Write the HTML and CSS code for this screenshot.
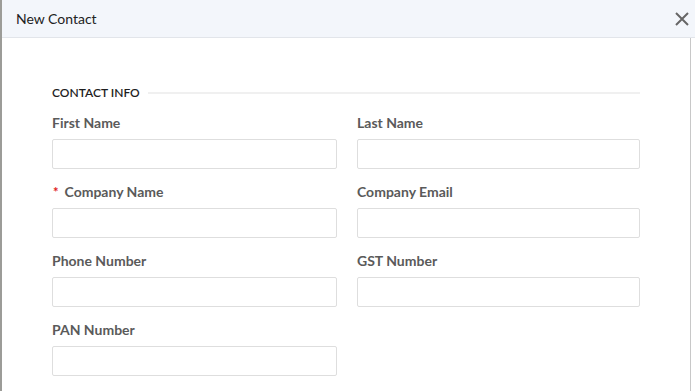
FILE: index.html
```html
<!DOCTYPE html>
<html>
<head>
<meta charset="utf-8">
<link rel="stylesheet" href="styles.css">
</head>
<body>
<div class="page">
  <div class="edge"></div>
  <div class="modal">
    <div class="header">
      <span class="title">New Contact</span>
      <button class="close" aria-label="Close">
        <svg width="14" height="14" viewBox="0 0 14 14"><path d="M1 1L13 13M13 1L1 13" stroke="#666" stroke-width="2" fill="none"/></svg>
      </button>
    </div>
    <div class="content">
      <div class="body">
        <div class="section-title"><span>CONTACT INFO</span><span class="rule"></span></div>
        <div class="grid">
          <div class="field"><label>First Name</label><input type="text"></div>
          <div class="field"><label>Last Name</label><input type="text"></div>
          <div class="field"><label><span class="req">*</span>Company Name</label><input type="text"></div>
          <div class="field"><label>Company Email</label><input type="text"></div>
          <div class="field"><label>Phone Number</label><input type="text"></div>
          <div class="field"><label>GST Number</label><input type="text"></div>
          <div class="field"><label>PAN Number</label><input type="text"></div>
        </div>
      </div>
      <div class="scrollbar"></div>
    </div>
  </div>
</div>
</body>
</html>
```
FILE: styles.css
```css
html, body {
  margin: 0;
  padding: 0;
  height: 100%;
  background: #fff;
  font-family: Lato, "Liberation Sans", sans-serif;
  overflow: hidden;
}
.page {
  display: flex;
  height: 391px;
}
.edge {
  width: 2px;
  background: #9c9c98;
  flex: none;
}
.modal {
  flex: 1;
  display: flex;
  flex-direction: column;
}
.header {
  height: 37px;
  background: #f3f6fb;
  border-bottom: 1px solid #e2e5ea;
  display: flex;
  align-items: center;
  justify-content: space-between;
  padding: 0 6px 0 14px;
  flex: none;
}
.title {
  font-size: 14px;
  color: #222;
  line-height: 37px;
}
.close {
  border: 0;
  background: transparent;
  padding: 0;
  width: 14px;
  height: 14px;
  margin-top: 1px;
  display: flex;
}
.content {
  flex: 1;
  display: flex;
}
.body {
  width: 588px;
  padding: 47px 0 0 50px;
}
.scrollbar {
  margin-left: auto;
  width: 1px;
  background: #c8c8c8;
  margin-right: 4px;
}
.section-title {
  display: flex;
  align-items: center;
  font-size: 12px;
  line-height: 16px;
  font-weight: 600;
  color: #1e1e1e;
  margin-bottom: 12px;
}
.section-title .rule {
  flex: 1;
  height: 2px;
  background: #f0f0f0;
  margin-left: 8px;
}
.grid {
  display: grid;
  grid-template-columns: 285px 283px;
  column-gap: 20px;
}
.field {
  display: flex;
  flex-direction: column;
  margin-bottom: 13px;
}
.field label {
  font-size: 14px;
  line-height: 20px;
  font-weight: 700;
  color: #5a5a5a;
  margin-bottom: 6px;
}
.req {
  color: #e02020;
  font-size: 13px;
  margin: 0 6px 0 1px;
}
.field input {
  height: 30px;
  box-sizing: border-box;
  border: 1px solid #dedede;
  border-radius: 2px;
  margin: 0;
  padding: 0 8px;
  background: #fff;
}
```
